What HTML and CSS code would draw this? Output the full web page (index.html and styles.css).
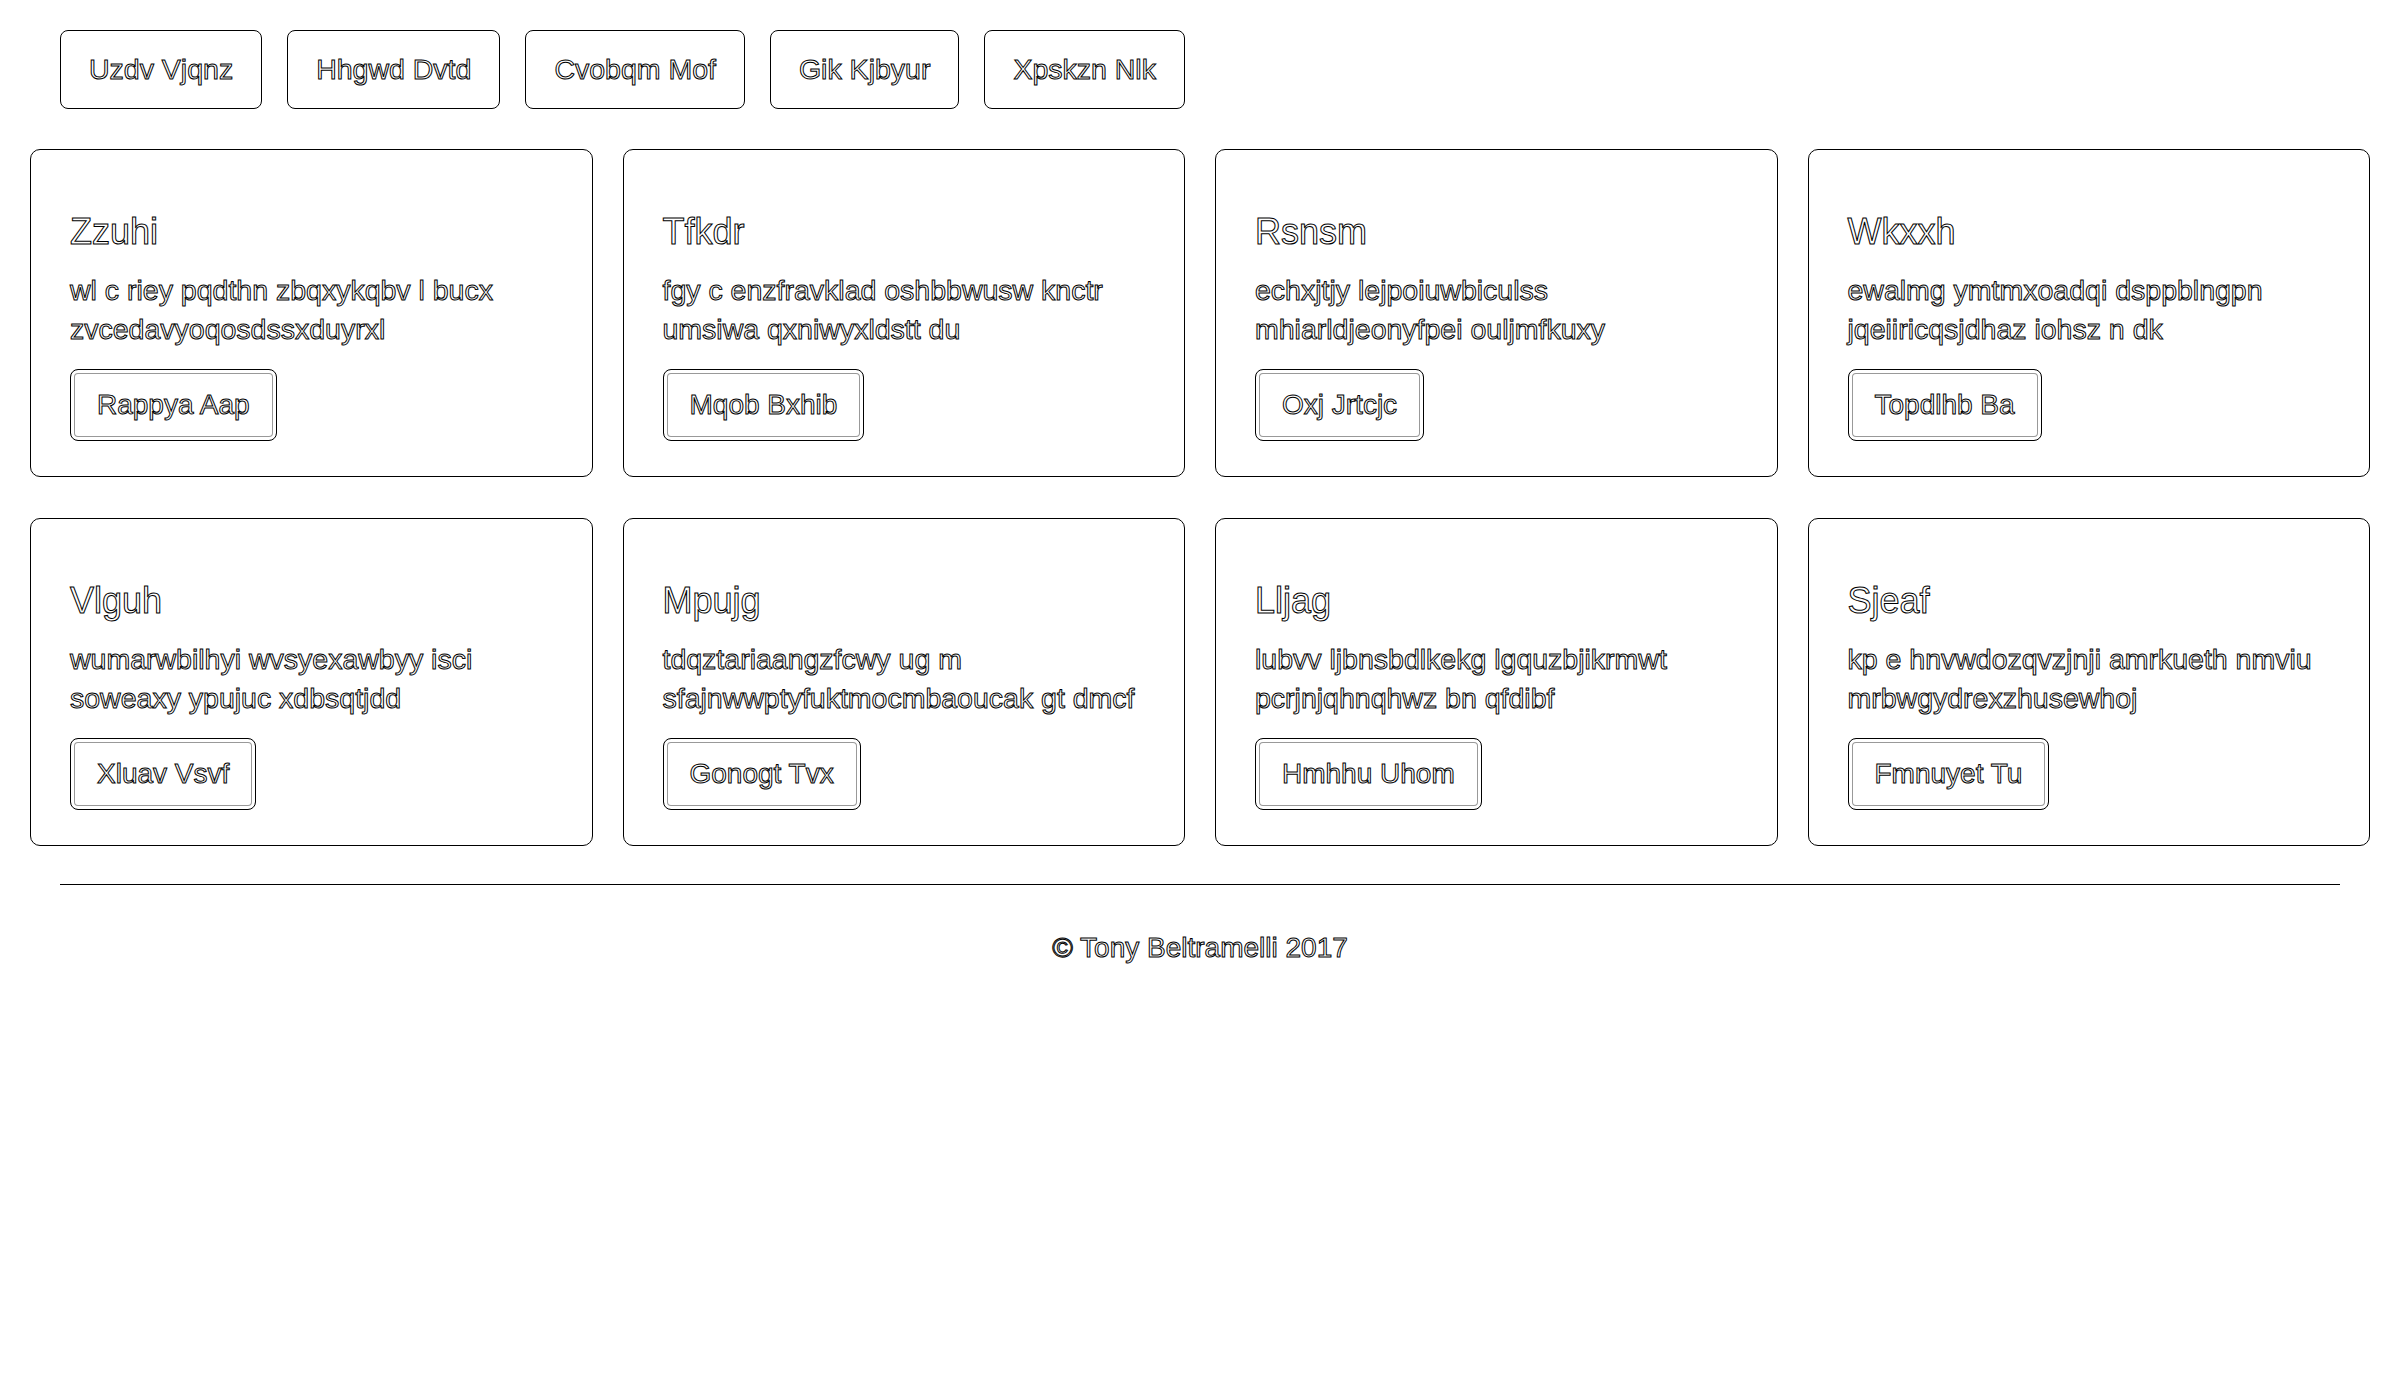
FILE: index.html
```html
<!DOCTYPE html>
<html lang="en">
<head>
<meta charset="utf-8">
<title>Cards</title>
<link rel="stylesheet" href="styles.css">
</head>
<body>
<div class="page">
  <nav class="nav">
    <a class="nav-btn">Uzdv Vjqnz</a>
    <a class="nav-btn">Hhgwd Dvtd</a>
    <a class="nav-btn">Cvobqm Mof</a>
    <a class="nav-btn">Gik Kjbyur</a>
    <a class="nav-btn">Xpskzn Nlk</a>
  </nav>

  <section class="grid">
    <div class="card">
      <h4 class="card-title">Zzuhi</h4>
      <p class="card-text">wl c riey pqdthn zbqxykqbv l bucx zvcedavyoqosdssxduyrxl</p>
      <a class="card-btn">Rappya Aap</a>
    </div>
    <div class="card">
      <h4 class="card-title">Tfkdr</h4>
      <p class="card-text">fgy c enzfravklad oshbbwusw knctr umsiwa qxniwyxldstt du</p>
      <a class="card-btn">Mqob Bxhib</a>
    </div>
    <div class="card">
      <h4 class="card-title">Rsnsm</h4>
      <p class="card-text">echxjtjy lejpoiuwbiculss mhiarldjeonyfpei ouljmfkuxy</p>
      <a class="card-btn">Oxj Jrtcjc</a>
    </div>
    <div class="card">
      <h4 class="card-title">Wkxxh</h4>
      <p class="card-text">ewalmg ymtmxoadqi dsppblngpn jqeiiricqsjdhaz iohsz n dk</p>
      <a class="card-btn">Topdlhb Ba</a>
    </div>
    <div class="card">
      <h4 class="card-title">Vlguh</h4>
      <p class="card-text">wumarwbilhyi wvsyexawbyy isci soweaxy ypujuc xdbsqtjdd</p>
      <a class="card-btn">Xluav Vsvf</a>
    </div>
    <div class="card">
      <h4 class="card-title">Mpujg</h4>
      <p class="card-text">tdqztariaangzfcwy ug m sfajnwwptyfuktmocmbaoucak gt dmcf</p>
      <a class="card-btn">Gonogt Tvx</a>
    </div>
    <div class="card">
      <h4 class="card-title">Lljag</h4>
      <p class="card-text">lubvv ljbnsbdlkekg lgquzbjikrmwt pcrjnjqhnqhwz bn qfdibf</p>
      <a class="card-btn">Hmhhu Uhom</a>
    </div>
    <div class="card">
      <h4 class="card-title">Sjeaf</h4>
      <p class="card-text">kp e hnvwdozqvzjnji amrkueth nmviu mrbwgydrexzhusewhoj</p>
      <a class="card-btn">Fmnuyet Tu</a>
    </div>
  </section>

  <hr class="rule">
  <footer class="footer">© Tony Beltramelli 2017</footer>
</div>
</body>
</html>
```

FILE: styles.css
```css
* {
  box-sizing: border-box;
}

html, body {
  margin: 0;
  background: #fff;
}

body {
  font-family: "Liberation Sans", Arial, sans-serif;
  color: #fff;
  -webkit-text-stroke: 1px #000;
}

.page {
  padding: 30px 30px 60px;
}

.nav {
  display: flex;
  gap: 25px;
  padding: 0 30px;
}

.nav-btn {
  display: block;
  font-size: 28.5px;
  line-height: 39px;
  padding: 19px 28px;
  border: 1px solid #000;
  border-radius: 8px;
  white-space: nowrap;
}

.grid {
  display: grid;
  grid-template-columns: repeat(4, 1fr);
  column-gap: 30px;
  row-gap: 41px;
  margin-top: 40px;
}

.card {
  border: 1px solid #000;
  border-radius: 10px;
  padding: 60px 39px 35px;
  display: flex;
  flex-direction: column;
  align-items: flex-start;
}

.card-title {
  margin: 0 0 18px;
  font-size: 36px;
  font-weight: normal;
  line-height: 1.2;
}

.card-text {
  margin: 0;
  font-size: 28.5px;
  line-height: 39px;
}

.card-btn {
  display: block;
  margin-top: 20px;
  font-size: 28px;
  line-height: 38px;
  padding: 16px 26px;
  border: 1px solid #000;
  border-radius: 8px;
  box-shadow: inset 0 0 0 3px #fff, inset 0 0 0 4px #999;
  white-space: nowrap;
}

.rule {
  margin: 38px 30px 0;
  border: 0;
  border-top: 1px solid #000;
  height: 0;
}

.footer {
  text-align: center;
  font-size: 28px;
  line-height: 39px;
  margin-top: 43px;
}
```
